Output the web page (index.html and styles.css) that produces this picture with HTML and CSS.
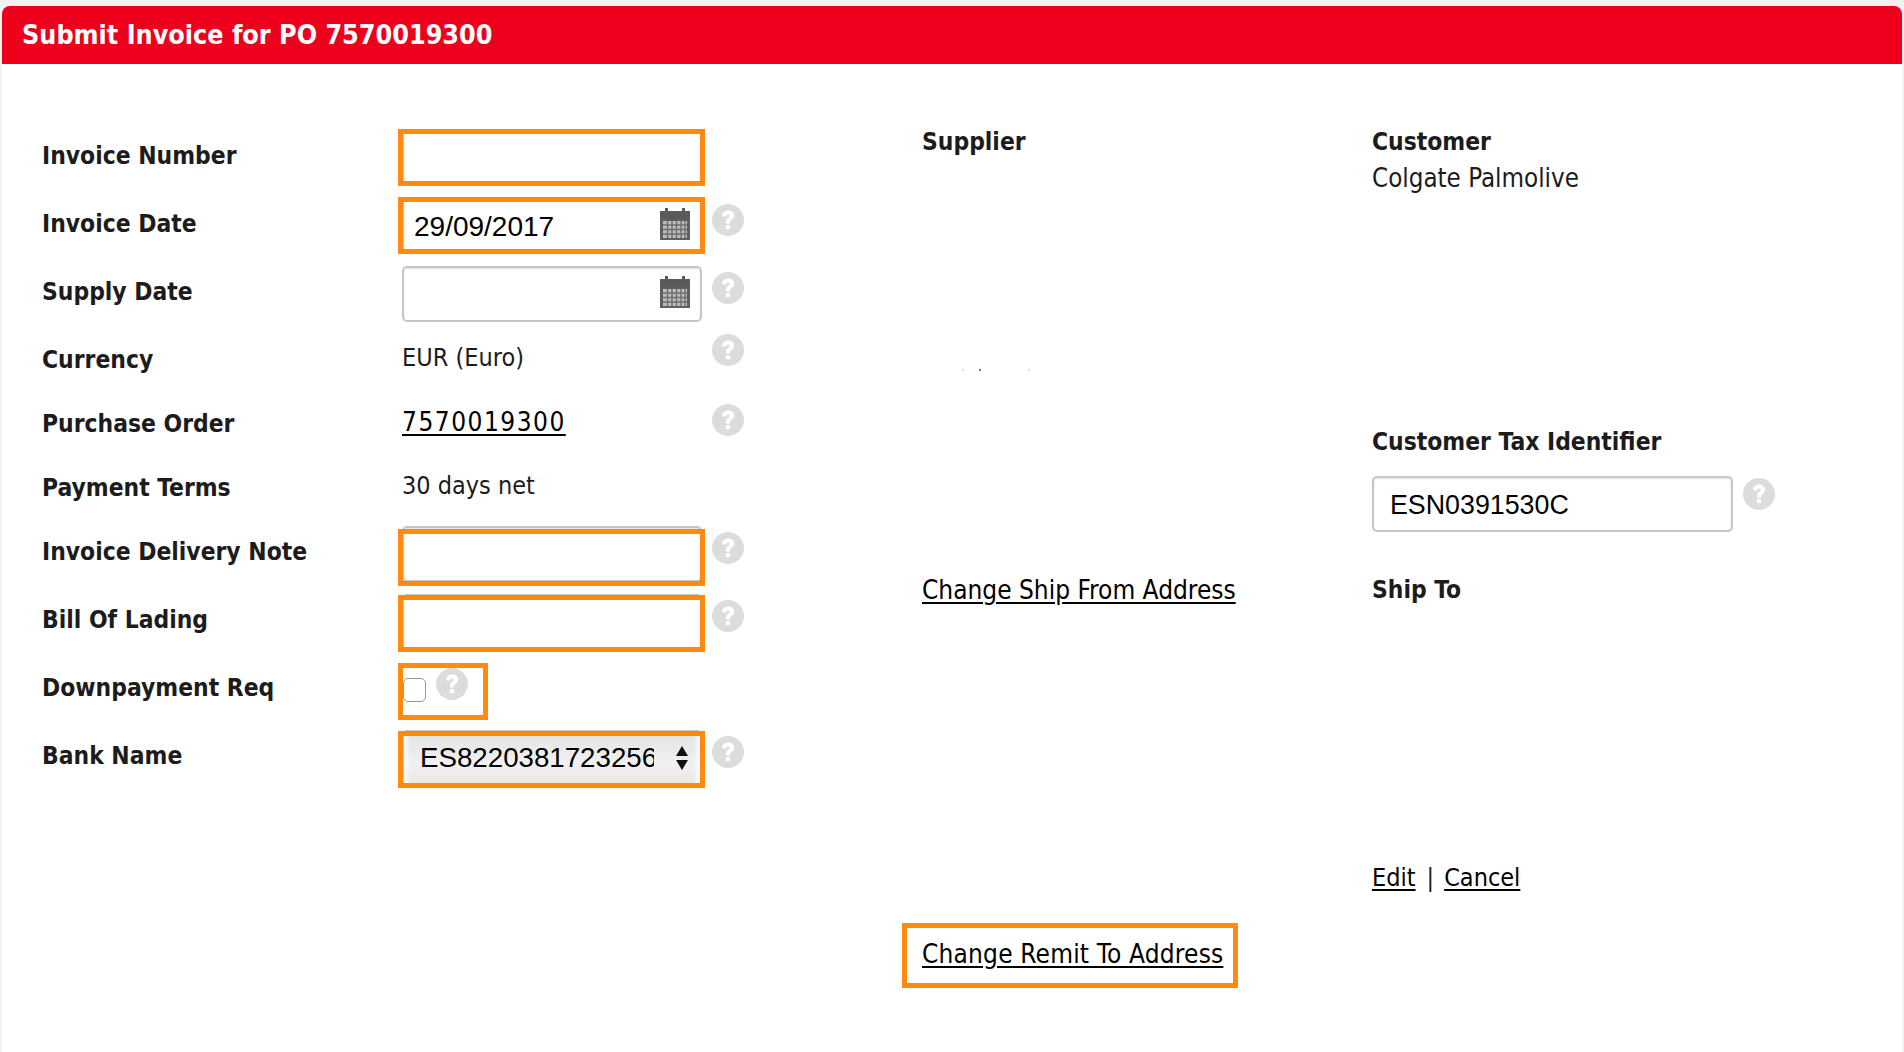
FILE: index.html
```html
<!DOCTYPE html>
<html lang="en">
<head>
<meta charset="utf-8">
<title>Submit Invoice</title>
<link rel="stylesheet" href="styles.css">
</head>
<body>
<svg class="defs" width="0" height="0" aria-hidden="true">
  <defs>
    <symbol id="help" viewBox="0 0 32 32">
      <circle cx="16" cy="16" r="16" fill="#dcdcdc"/>
      <path d="M10 12.200c0-3.400 2.600-5.700 6.200-5.700 3.500 0 6 2 6 5 0 2.100-1.100 3.300-2.700 4.500-1.200.9-1.500 1.300-1.500 2.500v.9h-4.200v-1.200c0-2.100.8-3.200 2.300-4.300 1.100-.8 1.600-1.300 1.600-2.100 0-.9-.7-1.400-1.600-1.400-1.100 0-1.800.7-1.900 2z" fill="#fff"/>
      <rect x="13.800" y="21" width="4.300" height="4.300" rx=".8" fill="#fff"/>
    </symbol>
    <symbol id="cal" viewBox="0 0 30 32">
      <path d="M0 3h5V0h3v3h14V0h3v3h5v8H0z" fill="#5a5a5a"/>
      <rect y="11" width="30" height="21" fill="#5f5f5f"/>
      <path d="M3 13h24v17H3z" fill="#bdbdbd"/>
      <path d="M7.500 13v17M12 13v17M16.500 13v17M21 13v17M25 13v17M3 17h24M3 21.500h24M3 26h24" stroke="#6e6e6e" stroke-width="1.400" fill="none"/>
    </symbol>
  </defs>
</svg>
<main class="card">
  <h1 class="title">Submit Invoice for PO 7570019300</h1>
  <div class="content">
    <form class="form">
      <div class="row">
        <label class="label">Invoice Number</label>
        <div class="field"><input class="input" type="text"><span class="mark"></span></div>
      </div>
      <div class="row">
        <label class="label">Invoice Date</label>
        <div class="field"><input class="input" type="text" value="29/09/2017"><svg class="cal"><use href="#cal"/></svg><span class="mark"></span></div>
        <svg class="help"><use href="#help"/></svg>
      </div>
      <div class="row">
        <label class="label">Supply Date</label>
        <div class="field"><input class="input" type="text"><svg class="cal"><use href="#cal"/></svg></div>
        <svg class="help"><use href="#help"/></svg>
      </div>
      <div class="row row-short">
        <label class="label">Currency</label>
        <div class="field value">EUR (Euro)</div>
        <svg class="help help-top"><use href="#help"/></svg>
      </div>
      <div class="row row-short">
        <label class="label">Purchase Order</label>
        <div class="field value"><a class="link digits" href="#">7570019300</a></div>
        <svg class="help"><use href="#help"/></svg>
      </div>
      <div class="row row-short">
        <label class="label">Payment Terms</label>
        <div class="field value">30 days net</div>
      </div>
      <div class="row">
        <label class="label">Invoice Delivery Note</label>
        <div class="field"><input class="input" type="text"><span class="mark mark-note"></span></div>
        <svg class="help"><use href="#help"/></svg>
      </div>
      <div class="row">
        <label class="label">Bill Of Lading</label>
        <div class="field"><input class="input" type="text"><span class="mark mark-low"></span></div>
        <svg class="help"><use href="#help"/></svg>
      </div>
      <div class="row">
        <label class="label">Downpayment Req</label>
        <div class="check-wrap">
          <span class="check"></span>
          <svg class="help help-check"><use href="#help"/></svg>
          <span class="mark mark-check"></span>
        </div>
      </div>
      <div class="row">
        <label class="label">Bank Name</label>
        <div class="field">
          <div class="select"><span class="select-text">ES8220381723256</span>
            <svg class="arrows" viewBox="0 0 12 24"><path d="M6 0l6 10H0zM0 14h12L6 24z" fill="#111"/></svg>
          </div>
          <span class="mark mark-low"></span>
        </div>
        <svg class="help"><use href="#help"/></svg>
      </div>
    </form>

    <section class="col-supplier">
      <h2 class="head">Supplier</h2>
      <div class="specks"><i></i><i></i><i></i></div>
      <a class="link ship-from" href="#">Change Ship From Address</a>
      <div class="remit"><a class="link" href="#">Change Remit To Address</a><span class="mark mark-remit"></span></div>
    </section>

    <section class="col-customer">
      <h2 class="head">Customer</h2>
      <p class="plain">Colgate Palmolive</p>
      <h2 class="head tax-head">Customer Tax Identifier</h2>
      <div class="tax-row">
        <div class="field"><input class="input" type="text" value="ESN0391530C"></div>
        <svg class="help help-tax"><use href="#help"/></svg>
      </div>
      <h2 class="head ship-to">Ship To</h2>
      <div class="actions"><a class="link" href="#">Edit</a><span class="sep">|</span><a class="link" href="#">Cancel</a></div>
    </section>
  </div>
</main>
</body>
</html>
```
FILE: styles.css
```css
* { box-sizing: border-box; }
html, body { margin: 0; padding: 0; height: 100%; }
body {
  background: #f2f2f2;
  font-family: "DejaVu Sans Condensed", "DejaVu Sans", sans-serif;
  color: #1c1c1c;
  overflow: hidden;
}
.defs { position: absolute; }
.card {
  margin: 6px 2px 0;
  height: 1046px;
  background: #fff;
  border-radius: 8px 8px 0 0;
}
.title {
  margin: 0;
  height: 58px;
  padding-left: 20px;
  background: #ee001c;
  border-radius: 8px 8px 0 0;
  color: #fff;
  font-size: 26.700px;
  font-weight: 700;
  line-height: 58px;
}
.content {
  display: grid;
  grid-template-columns: 920px 450px 1fr;
  padding-top: 54px;
}
.form { padding: 12px 0 0 40px; }
.row { display: flex; align-items: flex-start; height: 68px; }
.row-short { height: 64px; }
.label {
  width: 360px;
  flex: none;
  font-size: 24.400px;
  font-weight: 700;
  line-height: 52px;
}
.field { position: relative; width: 300px; height: 56px; flex: none; }
.input {
  display: block;
  width: 300px;
  height: 56px;
  padding: 2px 16px 0 10px;
  border: 2px solid #c6c6c6;
  border-radius: 5px;
  background: #fff;
  box-shadow: inset 0 1px 2px rgba(0,0,0,.12);
  font-family: "Liberation Sans", Arial, sans-serif;
  font-size: 28px;
  color: #000;
  outline: none;
}
.value { font-size: 25px; line-height: 48px; }
.link { color: #000; text-decoration: underline; text-underline-offset: 3px; }
.digits { font-size: 26px; letter-spacing: 1.500px; }
.cal { position: absolute; left: 258px; top: 10px; width: 30px; height: 32px; }
.help { width: 32px; height: 32px; flex: none; margin-left: 10px; margin-top: 6px; }
.help-top { margin-top: 0; }
.mark {
  position: absolute;
  left: -4px;
  top: -1px;
  width: 307px;
  height: 57px;
  border: 5px solid #ff8a0f;
  pointer-events: none;
}
.mark-low { top: 1px; }
.mark-note { top: 3px; }
.check-wrap { position: relative; display: flex; width: 80px; height: 56px; flex: none; }
.check {
  display: block;
  width: 23px;
  height: 24px;
  margin: 16px 0 0 1px;
  border: 1px solid #9a9a9a;
  border-radius: 5px;
  background: #fff;
}
.help-check { margin: 6px 0 0 10px; }
.mark-check { width: 90px; top: 1px; }
.select {
  display: flex;
  align-items: center;
  width: 300px;
  height: 56px;
  padding: 0 12px 0 16px;
  border: 2px solid #c6c6c6;
  border-radius: 5px;
  background: linear-gradient(#e2e2e2, #f1f1f1 60%, #e8e8e8);
  box-shadow: inset 7px 0 5px -4px #fff, inset -7px 0 5px -4px #fff;
  font-family: "Liberation Sans", Arial, sans-serif;
  font-size: 27.700px;
  color: #000;
}
.select-text { width: 236px; overflow: hidden; white-space: nowrap; }
.arrows { width: 12px; height: 24px; margin-left: 22px; flex: none; }
.head { margin: 0; font-size: 24.400px; font-weight: 700; line-height: 36px; }
.col-supplier, .col-customer { padding-top: 6px; }
.specks { display: flex; height: 2px; margin-top: 209px; padding-left: 40px; }
.specks i { width: 2px; height: 2px; background: #777; margin-right: 15px; }
.specks i:nth-child(1) { background: #ddd; }
.specks i:nth-child(3) { background: #ddd; margin-left: 32px; }
.ship-from { display: block; margin-top: 201px; font-size: 26px; line-height: 36px; }
.remit { position: relative; width: 302px; margin-top: 328px; font-size: 26px; letter-spacing: .19px; line-height: 36px; }
.mark-remit { left: -20px; top: -13px; width: 336px; height: 65px; }
.plain { margin: 0; font-size: 25.700px; line-height: 36px; }
.tax-head { margin-top: 228px; }
.tax-row { display: flex; align-items: flex-start; margin-top: 16px; }
.tax-row .field { width: 361px; }
.tax-row .input { width: 361px; padding-left: 16px; font-size: 26.800px; }
.help-tax { margin-top: 2px; }
.ship-to { margin-top: 40px; }
.actions { display: flex; margin-top: 252px; font-size: 25px; line-height: 36px; }
.sep { margin: 0 10px 0 11px; }
```
